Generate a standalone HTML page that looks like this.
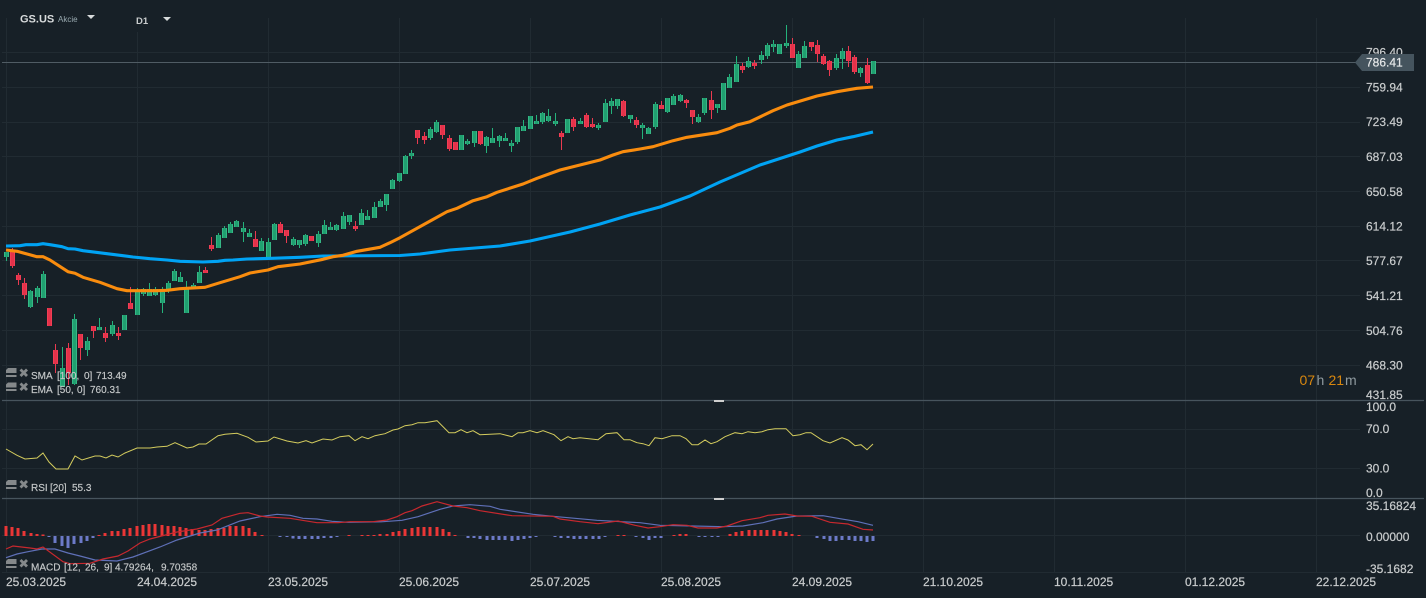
<!DOCTYPE html>
<html><head><meta charset="utf-8">
<style>
html,body{margin:0;padding:0;background:#172027;width:1426px;height:598px;overflow:hidden}
svg{display:block;font-family:"Liberation Sans",sans-serif}
text{fill:#c9cccd;font-size:12px;stroke:#c9cccd;stroke-width:.2px}
.l text{font-size:10px;fill:#c6c9ca;stroke:#c6c9ca;stroke-width:.15px}
</style></head><body>
<svg width="1426" height="598" viewBox="0 0 1426 598" xmlns="http://www.w3.org/2000/svg">
<defs>
<path id="gb" d="M6 252V257M30 291V307M37 288V297M43 274V298M62 368V387M74 319V384M87 341V350M99 327V330M112 325V334M124 315V330M137 292V315M143 289V294M149 289V296M155 289V295M162 292V303M168 283V290M174 271V281M180 277V282M186 288V313M193 285V288M199 272V283M218 235V248M224 228V238M230 224V233M236 221V227M243 228V232M249 233V237M261 241V251M268 242V257M274 224V240M293 239V245M299 240V245M305 235V244M318 234V243M324 225V234M330 227V230M336 225V230M343 216V229M349 215V222M361 213V225M367 216V220M374 207V218M380 201V207M386 194V205M392 180V189M399 173V181M405 156V174M411 153V156M430 129V138M436 122V132M461 135V150M467 141V144M474 131V143M486 137V146M492 138V143M499 136V141M505 138V141M511 143V146M517 127V142M523 126V131M530 116V129M536 121V124M542 113V122M548 116V121M555 121V124M567 119V133M580 121V124M598 125V128M605 103V122M611 101V106M617 99V106M630 115V119M642 125V128M648 128V134M655 104V127M667 98V112M673 96V105M680 95V101M698 117V122M704 98V113M717 104V108M723 83V110M729 77V88M736 64V82M748 61V67M761 55V60M767 45V56M773 44V47M779 44V54M786 43V46M798 54V68M804 46V58M836 58V68M842 51V59M860 68V73M873 61V74"/>
<path id="rb" d="M12 250V266M18 275V280M24 283V295M49 308V326M55 350V364M68 348V373M80 334V348M93 326V331M105 333V338M118 333V336M130 303V309M205 270V273M211 245V249M255 239V247M280 224V233M286 230V236M311 236V241M355 226V229M417 130V138M424 136V140M442 125V135M449 138V149M455 142V150M480 131V144M561 133V137M573 119V127M586 115V127M592 124V127M623 101V116M636 120V125M661 105V109M686 100V103M692 110V117M711 100V110M742 66V70M754 63V66M792 44V58M811 42V47M817 45V54M823 56V64M829 61V70M848 51V61M854 57V72M867 65V83"/>
</defs>
<!-- grid -->
<g stroke="#212b32" stroke-width="1" fill="none">
<path d="M2 52.5H1360M2 87.5H1360M2 122.5H1360M2 156.5H1360M2 191.5H1360M2 226.5H1360M2 260.5H1360M2 295.5H1360M2 330.5H1360M2 365.5H1360M2 429.5H1360M2 468.5H1360M2 535.5H1360M2 572.5H1360"/>
<path d="M6.5 18V572M137.5 32V572M268.5 18V572M399.5 18V572M530.5 18V572M661.5 18V572M792.5 18V572M923.5 18V572M1054.5 18V572M1185.5 18V572M1316.5 18V572"/>
</g>
<!-- separators -->
<path d="M2 400.5H1424M2 498.5H1424" stroke="#47545d" stroke-width="1.2" fill="none"/>
<rect x="714" y="400" width="10" height="2" fill="#cfcfcf"/>
<rect x="714" y="498" width="10" height="2" fill="#cfcfcf"/>
<!-- current price line -->
<path d="M2 62.5H1356" stroke="#505c64" stroke-width="1" fill="none"/>
<!-- wicks -->
<path fill="none" stroke="#24b27b" stroke-width="1" d="M6.5 252V261M30.5 290V308M37.5 286V303M43.5 271V298M62.5 347V387M74.5 314V385M87.5 337V356M99.5 318V330M112.5 321V336M137.5 288V315M143.5 288V296M149.5 283V296M155.5 287V296M162.5 287V313M168.5 281V293M174.5 269V281M180.5 272V282M186.5 281V313M193.5 283V288M199.5 266V283M218.5 233V248M224.5 226V238M230.5 222V233M236.5 220V227M243.5 222V242M249.5 229V237M261.5 238V251M268.5 238V257M274.5 223V240M293.5 237V246M299.5 240V248M305.5 234V246M318.5 231V247M324.5 220V234M330.5 222V230M336.5 224V231M343.5 212V229M349.5 215V225M361.5 209V225M367.5 210V220M374.5 202V218M380.5 199V207M386.5 194V211M392.5 179V189M399.5 173V182M405.5 155V174M411.5 150V159M430.5 127V140M436.5 120V133M467.5 139V145M474.5 131V147M486.5 136V153M492.5 128V143M499.5 135V147M505.5 133V141M511.5 140V152M517.5 127V144M523.5 120V131M536.5 115V124M542.5 112V124M548.5 109V122M555.5 113V126M580.5 118V124M598.5 123V130M605.5 99V122M611.5 98V114M617.5 99V109M630.5 115V123M642.5 123V139M648.5 127V134M655.5 102V129M667.5 98V113M673.5 94V105M680.5 94V102M698.5 114V123M704.5 98V115M717.5 104V113M729.5 74V88M736.5 56V82M748.5 57V68M761.5 51V64M767.5 43V59M773.5 40V52M786.5 25V48M798.5 51V68M804.5 41V58M836.5 54V70M842.5 48V69M860.5 67V77"/>
<path fill="none" stroke="#ea3a50" stroke-width="1" d="M12.5 248V268M18.5 273V285M24.5 278V299M55.5 344V373M68.5 343V385M80.5 334V360M93.5 326V338M105.5 327V342M118.5 327V340M130.5 287V309M205.5 267V273M211.5 237V251M255.5 231V247M280.5 222V233M286.5 230V243M355.5 221V231M417.5 130V144M424.5 132V144M442.5 125V139M449.5 135V151M480.5 131V145M561.5 131V150M573.5 117V131M586.5 113V128M592.5 118V128M623.5 100V117M636.5 117V128M661.5 101V109M686.5 99V108M692.5 110V124M711.5 91V119M742.5 63V73M754.5 60V69M792.5 38V58M811.5 42V51M817.5 40V62M823.5 54V65M829.5 60V76M848.5 46V67M854.5 55V74M867.5 58V84"/>
<!-- bodies -->
<g transform="translate(.5 0)" fill="none">
<use href="#gb" stroke="#36b886" stroke-width="5"/>
<use href="#gb" stroke="#20a070" stroke-width="3"/>
<use href="#rb" stroke="#f23e55" stroke-width="5"/>
<use href="#rb" stroke="#e4324a" stroke-width="3"/>
</g>
<!-- SMA -->
<polyline fill="none" stroke="#00a3f4" stroke-width="3.1" stroke-linejoin="round" points="6,246 20,245.7 26,244.7 37,244.7 43,243.7 50,244.7 62,246.7 68,248.7 75,249 83,250.7 107,253.7 115,254.7 133,257 150,258.7 167,260 180,261.3 203,262 218,261.3 225,260.3 233,260 247,259 272,258.3 300,257.3 323,256 400,255.5 420,254 450,250 500,246 530,241 570,232 600,224 630,215 660,207 690,196 720,182 760,165 800,152 817,146 837,140 853,136.7 873,132"/>
<!-- EMA -->
<polyline fill="none" stroke="#f98c0e" stroke-width="3.1" stroke-linejoin="round" points="6,250 17,251.3 28,254.3 37,256.7 43,256.7 50,260 68,271.7 75,273.3 83,277.3 100,282.3 117,288.7 127,290.7 157,290.7 167,290.3 180,288.7 205,287.3 220,282.7 240,276.7 250,273 268,270 278,266.7 300,264 323,259.3 333,256.7 343,255.3 357,251.3 380,247.3 390,242.7 400,237.7 432,220 447,211.7 457,208.3 473,200.7 487,196.7 497,192.3 523,184 537,178.3 560,170 580,165 600,160 613,155 623,151.7 640,149 653,146.7 673,140.7 687,137.3 717,132.7 730,128.3 737,125 750,121.7 773,110.7 787,105 817,96 837,91.7 857,88.3 873,87"/>
<!-- RSI -->
<polyline fill="none" stroke="#d4cc5e" stroke-width="1" points="6,449 17,455.3 25,459 37,458 43,453 49,462 56,469 68,469 75,456 82,460 95,456 100,456 106,458 112,455 118,457 125,453 137,448 150,448 157,447 167,446.3 175,442.7 187,448 193,447 199,444 206,444 218,435.7 225,434.3 237,433.3 248,437.3 256,442 268,441 274,437 287,441 298,443 306,440.7 312,443 323,439 332,440 340,436.7 349,435.7 355,440.7 362,436.7 368,438.7 375,435.7 385,433.7 393,430 398,429 405,425.7 412,424.7 418,422.7 425,422.7 437,420.7 449,432.7 455,432.7 461,429.7 467,432.7 473,430.7 480,434.7 500,433.7 512,436.7 518,432.7 523,432.7 530,430.7 537,432.7 543,430.7 554,434.7 561,440.7 568,436.7 573,438.7 580,437.7 598,439.7 606,433.7 617,432.7 624,439.7 630,439.7 637,442.7 643,443.7 649,445.7 655,437.7 662,438.7 672,435.7 680,435.7 686,438.7 692,444.7 698,444.7 705,440 711,443.7 717,441.7 725,436.7 735,432.7 742,433.7 748,431.7 755,432.7 762,431.7 768,429.7 775,428.7 786,428.7 793,435.7 800,434.7 806,432.7 811,432.7 823,440.7 830,443 842,437.7 848,440 855,445.7 861,444.7 867,449.7 873,444"/>
<!-- MACD hist -->
<path fill="none" stroke="#ea3636" stroke-width="3" d="M6 526V536M12 527V536M18 528V536M24 531V536M31 533V536M37 534V536M43 534.5V536M99 535V536M105 533V536M112 531V536M118 531V536M124 529V536M130 528V536M137 526V536M143 525V536M149 524V536M155 524V536M162 525V536M168 526V536M174 526V536M180 527V536M186 528V536M192 529V536M199 530V536M205 530V536M211 529V536M218 528V536M224 528V536M230 526V536M236 526V536M243 526V536M249 528V536M255 532V536M262 535V536M349 535V536M362 535V536M368 535V536M374 535V536M380 534V536M387 534V536M393 532V536M399 531V536M405 529V536M412 528V536M418 527V536M424 527V536M430 527V536M437 527V536M443 529V536M449 532V536M455 535V536M618 535V536M624 535V536M674 535V536M680 534V536M686 534V536M730 534V536M736 532V536M742 531V536M749 530V536M755 530V536M761 530V536M767 530V536M774 530V536M780 531V536M786 532V536M792 534V536M799 535V536"/>
<path fill="none" stroke="#6c7ac8" stroke-width="3" d="M49 536V537M55 536V543M62 536V546M68 536V548M74 536V544M81 536V543M87 536V541M93 536V538M280 536V537M287 536V537M293 536V538.5M299 536V539M305 536V539M312 536V539M318 536V539M324 536V538M331 536V538M337 536V537M468 536V538M474 536V538M480 536V539M487 536V540M493 536V540M499 536V540M505 536V540M512 536V541M518 536V540M524 536V539M530 536V538M536 536V537M555 536V537M561 536V538M568 536V538M574 536V539M580 536V539M586 536V539M593 536V539M599 536V539M605 536V537M636 536V537M643 536V538M649 536V540M655 536V538M661 536V538M699 536V537M705 536V537M712 536V537M718 536V537M817 536V538M824 536V539M830 536V541M836 536V541M842 536V540M849 536V540M855 536V541M861 536V541M867 536V542M873 536V541"/>
<!-- MACD lines -->
<polyline fill="none" stroke="#5f70b8" stroke-width="1.2" points="6,557.7 17,554 28,551.7 42,549 55,549 68,553 80,556 95,560 117,561 133,557 150,550.7 160,547 177,540 200,533 217,530 240,521 260,516.7 277,514.3 290,515.3 303,518.3 317,519 332,521.3 348,522.3 383,521.7 402,520.3 418,516.7 440,509.3 453,506 470,504.7 490,506.3 500,509.3 533,514.3 557,516.7 597,520.3 640,522.7 660,525.3 693,526 723,526.7 743,526 763,522.7 777,519 797,516 823,515.7 840,518.7 858,521.7 873,525.3"/>
<polyline fill="none" stroke="#c8282e" stroke-width="1.2" points="6,549 13,546 30,548 37,549 43,547 63,561.7 70,563.7 90,563.3 103,559 118,556 128,551 140,543 150,539 177,532 197,529 212,525 222,518.3 240,513.3 248,512.7 260,516 267,517 290,518.3 317,522.7 338,522.7 350,521.7 373,521.7 387,520 397,516.7 405,512.7 412,510.7 422,506 437,501.7 453,506 467,507.7 480,510.7 512,515.7 553,516.3 560,519 580,521.7 598,523.7 618,521 635,525.3 648,528 660,526.7 673,524.7 687,525.3 698,528 717,528 727,526 742,520.7 760,517.7 768,515.3 785,514 797,516 812,516.3 830,522.3 848,524 863,529.3 873,530"/>
<!-- legend icons -->
<g fill="#85898b">
<path d="M8 368H16.5V373H6V370ZM6 375H16.5V377H6Z"/>
<path d="M8 382.5H16.5V387.5H6V384.5ZM6 389H16.5V391H6Z"/>
<path d="M8 480H16.5V485H6V482ZM6 487H16.5V489H6Z"/>
<path d="M8 559H16.5V564H6V561ZM6 566H16.5V568H6Z"/>
</g>
<g stroke="#85898b" stroke-width="2.8" fill="none">
<path d="M20.5 369.5L27 376M27 369.5L20.5 376"/>
<path d="M20.5 383.5L27 390M27 383.5L20.5 390"/>
<path d="M20.5 481L27 487.5M27 481L20.5 487.5"/>
<path d="M20.5 560L27 566.5M27 560L20.5 566.5"/>
</g>
<!-- legend text -->
<g class="l">
<text x="31" y="379">SMA</text><text x="57" y="379">[100,</text><text x="84" y="379">0]</text><text x="96" y="379">713.49</text>
<text x="31" y="393">EMA</text><text x="57" y="393">[50,</text><text x="77" y="393">0]</text><text x="90" y="393">760.31</text>
<text x="31" y="491">RSI</text><text x="50" y="491">[20]</text><text x="72" y="491">55.3</text>
<text x="31" y="570.5">MACD</text><text x="64" y="570.5">[12,</text><text x="85" y="570.5">26,</text><text x="104" y="570.5">9]</text><text x="115" y="570.5">4.79264,</text><text x="161" y="570.5">9.70358</text>
</g>
<!-- header -->
<text x="20" y="22.5" style="font-size:11px;font-weight:bold;fill:#d8dbdc;stroke:none">GS.US</text>
<text x="58" y="22" style="font-size:8px;fill:#9aabb1;stroke:none">Akcie</text>
<path d="M87 15H95L91 19Z" fill="#d8dbdc"/>
<text x="136" y="24" style="font-size:9.5px;font-weight:bold;fill:#c9cccd;stroke:none">D1</text>
<path d="M163 17H171L167 21Z" fill="#d8dbdc"/>
<!-- price axis -->
<text x="1366" y="56.5">796.40</text>
<path d="M1355 62.5L1362 54H1414V71H1362Z" fill="#45545e"/>
<text x="1366" y="66.5" style="fill:#e6e8e9;stroke:#e6e8e9">786.41</text>
<text x="1366" y="91.5">759.94</text>
<text x="1366" y="126">723.49</text>
<text x="1366" y="161">687.03</text>
<text x="1366" y="196">650.58</text>
<text x="1366" y="230.5">614.12</text>
<text x="1366" y="265">577.67</text>
<text x="1366" y="300">541.21</text>
<text x="1366" y="335">504.76</text>
<text x="1366" y="369.5">468.30</text>
<text x="1366" y="399">431.85</text>
<text x="1366" y="411">100.0</text>
<text x="1366" y="433">70.0</text>
<text x="1366" y="472.5">30.0</text>
<text x="1366" y="497">0.0</text>
<text x="1366" y="510">35.16824</text>
<text x="1366" y="541">0.00000</text>
<text x="1366" y="573">-35.1682</text>
<!-- date axis -->
<text x="6" y="586">25.03.2025</text>
<text x="137" y="586">24.04.2025</text>
<text x="268" y="586">23.05.2025</text>
<text x="399" y="586">25.06.2025</text>
<text x="530" y="586">25.07.2025</text>
<text x="661" y="586">25.08.2025</text>
<text x="792" y="586">24.09.2025</text>
<text x="923" y="586">21.10.2025</text>
<text x="1054" y="586">10.11.2025</text>
<text x="1185" y="586">01.12.2025</text>
<text x="1316" y="586">22.12.2025</text>
<!-- countdown -->
<text x="1299.5" y="385" style="font-size:14px;fill:#d8870f;stroke:none">07</text>
<text x="1316.5" y="385" style="font-size:14px;fill:#8f9a9f;stroke:none">h</text>
<text x="1328.5" y="385" style="font-size:14px;fill:#d8870f;stroke:none">21</text>
<text x="1345" y="385" style="font-size:14px;fill:#8f9a9f;stroke:none">m</text>
</svg>
</body></html>
